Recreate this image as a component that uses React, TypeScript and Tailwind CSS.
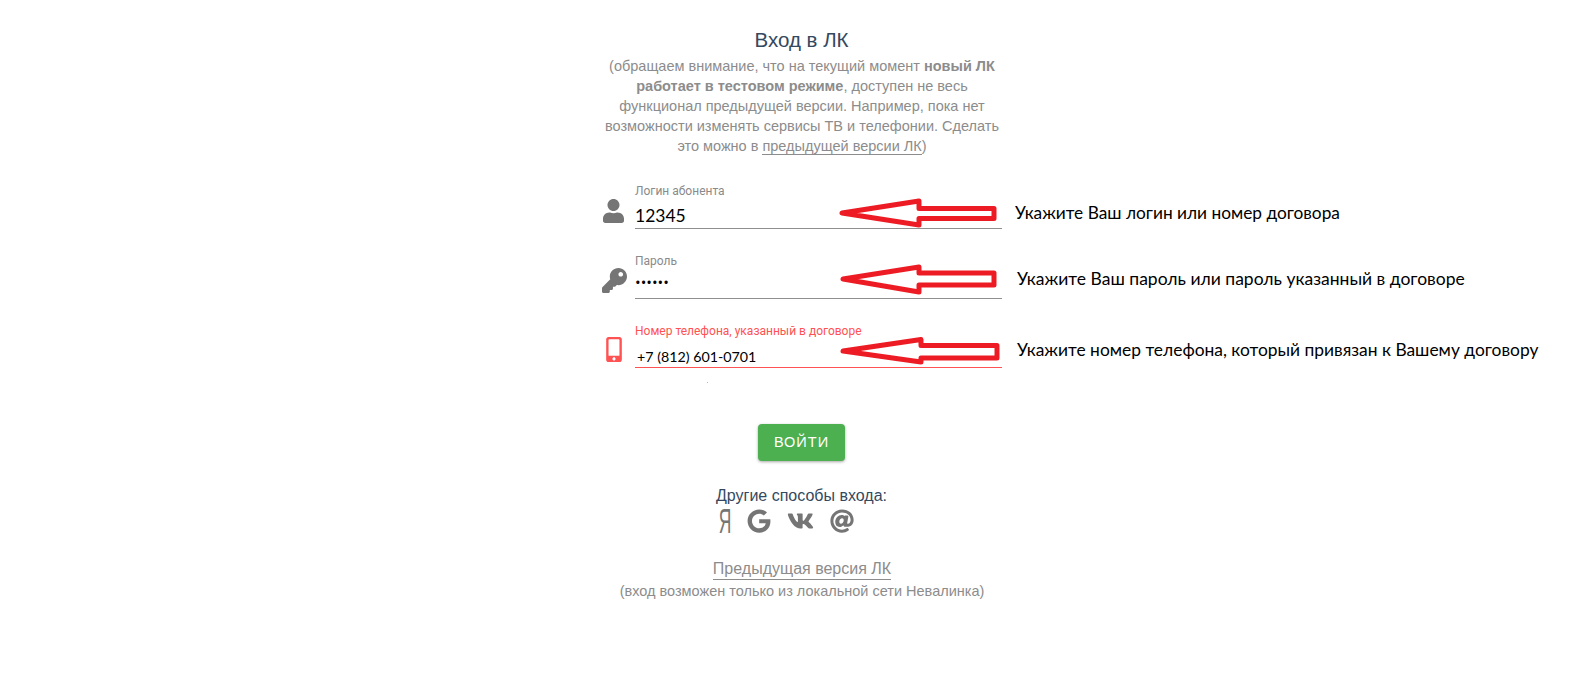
import { FaUser, FaKey, FaMobileAlt, FaGoogle, FaVk, FaAt } from "react-icons/fa";
import type { ReactNode } from "react";

type Field = {
  label: string;
  value: string;
  type: string;
  icon: ReactNode;
  hint: string;
  hintPos: string;
  points: string;
  row: string;
  iconBox: string;
  input: string;
  labelColor: string;
};

const fields: Field[] = [
  {
    label: "Логин абонента",
    value: "12345",
    type: "text",
    icon: <FaUser className="w-[21px] h-[24px]" />,
    hint: "Укажите Ваш логин или номер договора",
    hintPos: "left-[413px] top-[27px] text-[17.3px]",
    points: "240,39 317,27 317,34.5 392,34.5 392,44.5 317,44.5 317,51",
    row: "h-[55px]",
    iconBox: "text-[#757575] pl-[1px]",
    input: "h-[27px] text-[17.5px] border-[#8f8f8f] font-['Lato',sans-serif]",
    labelColor: "text-[#8a8a8a]",
  },
  {
    label: "Пароль",
    value: "123456",
    type: "password",
    icon: <FaKey className="w-[25px] h-[25px]" />,
    hint: "Укажите Ваш пароль или пароль указанный в договоре",
    hintPos: "left-[415px] top-[23px] text-[17.5px]",
    points: "241,35 317,23 317,29 392,29 392,41 317,41 317,48",
    row: "h-[55px]",
    iconBox: "text-[#757575]",
    input: "h-[27px] pb-[7px] text-[15px] border-[#8f8f8f] font-['Open_Sans',sans-serif]",
    labelColor: "text-[#8a8a8a]",
  },
  {
    label: "Номер телефона, указанный в договоре",
    value: "+7 (812) 601-0701",
    type: "text",
    icon: <FaMobileAlt className="w-[18px] h-[25px]" />,
    hint: "Укажите номер телефона, который привязан к Вашему договору",
    hintPos: "left-[415px] top-[24px] text-[17.4px]",
    points: "241,37 319,25.5 319,31.5 395,31.5 395,44 319,44 319,48",
    row: "h-[54px]",
    iconBox: "text-[#ff5252] pl-[3px]",
    input: "h-[26px] pt-[4px] pl-[2px] text-[14.25px] border-[#ff5252] font-['Lato',sans-serif]",
    labelColor: "text-[#ff5252]",
  },
];

export default function App() {
  return (
    <div className="min-h-[687px] bg-white pl-[12px] flex justify-center font-['Liberation_Sans',sans-serif]">
      <div className="w-[400px] flex flex-col items-center">
        <h1 className="mt-[26px] mr-[1px] text-[20.5px] leading-[28px] text-[#34495e]">Вход в ЛК</h1>
        <p className="mt-[2px] text-[14.5px] leading-[20px] text-[#8c8c8c] text-center w-[400px]">
          (обращаем внимание, что на текущий момент <b>новый ЛК работает в тестовом режиме</b>, доступен не весь
          функционал предыдущей версии. Например, пока нет возможности изменять сервисы ТВ и телефонии. Сделать это
          можно в <span className="border-b border-[#8c8c8c]">предыдущей версии ЛК</span>)
        </p>

        <div className="mt-[18px] w-full flex flex-col gap-[15px]">
          {fields.map((f) => (
            <div key={f.label} className={`relative flex items-end ${f.row}`}>
              <div className={`w-[33px] h-[37px] flex items-center ${f.iconBox}`}>{f.icon}</div>
              <div className="flex-1">
                <label className={`block text-[12px] leading-[14px] font-['Roboto',sans-serif] ${f.labelColor}`}>
                  {f.label}
                </label>
                <input
                  readOnly
                  type={f.type}
                  value={f.value}
                  className={`block w-full mt-[4px] outline-none border-b text-black ${f.input}`}
                />
              </div>

              {/* стрелка и подсказка поверх формы */}
              <svg className="absolute left-0 top-0 overflow-visible" width="400" height="55" fill="none">
                <polygon points={f.points} stroke="#ed1c24" strokeWidth="5" strokeLinejoin="round" />
              </svg>
              <span
                className={`absolute ${f.hintPos} whitespace-nowrap leading-[24px] text-black font-['Lato',sans-serif]`}
              >
                {f.hint}
              </span>
            </div>
          ))}
        </div>

        <div className="relative w-full h-0">
          <span className="absolute left-[105px] top-[14px] w-px h-px bg-[#ff9a9a]" />
        </div>

        <button className="mt-[56px] mr-[1px] w-[87px] h-[37px] rounded-[4px] bg-[#4caf50] text-white text-[14.5px] tracking-[1px] shadow-[0_1px_3px_rgba(0,0,0,0.35)]">
          ВОЙТИ
        </button>

        <div className="mt-[25px] mr-[1px] text-[16px] leading-[20px] text-[#34495e]">Другие способы входа:</div>
        <div className="mt-[3px] mr-[31px] h-[24px] flex items-center gap-[16px] text-[#757575]">
          <span className="w-[12px] flex justify-center text-[35px] leading-[24px] scale-x-[0.5]">Я</span>
          <FaGoogle className="w-[24px] h-[24px]" />
          <FaVk className="w-[27px] h-[24px]" />
          <FaAt className="w-[24px] h-[24px]" />
        </div>

        <a className="mt-[26px] text-[16px] leading-[20px] text-[#8c8c8c] border-b border-[#8c8c8c]">Предыдущая версия ЛК</a>
        <div className="mt-[1px] text-[14.5px] leading-[20px] text-[#8c8c8c] whitespace-nowrap">
          (вход возможен только из локальной сети Невалинка)
        </div>
      </div>
    </div>
  );
}
